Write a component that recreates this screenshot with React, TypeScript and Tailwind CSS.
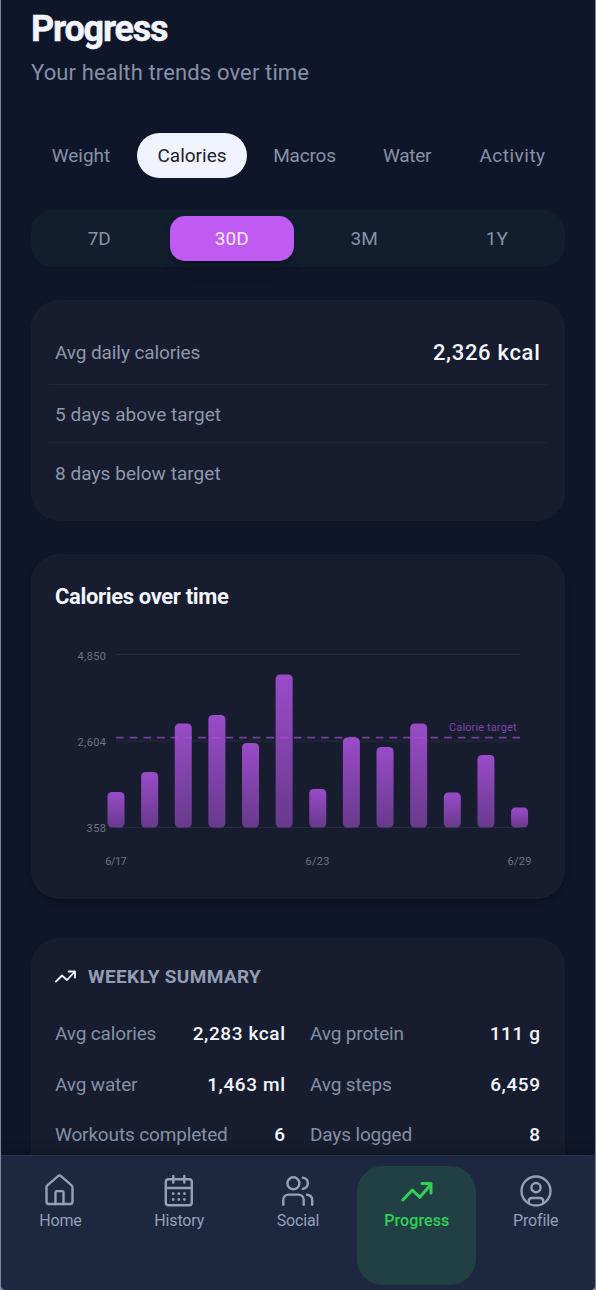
import type { ReactNode } from 'react'
import clsx from 'clsx'

const metrics = [
  { label: 'Weight', className: 'w-[100px]' },
  { label: 'Calories', className: 'w-[110px]' },
  { label: 'Macros', className: 'w-[103px] tracking-[-0.2px]' },
  { label: 'Water', className: 'w-[90px] tracking-[-0.3px]' },
  { label: 'Activity', className: 'w-[107px] pl-[2px] tracking-[0.5px]' },
]

const ranges = ['7D', '30D', '3M', '1Y']

// top edge of each bar, in chart units
const bars = [173, 153, 104.5, 96, 124, 55.5, 170, 118.5, 128, 104.5, 173.5, 136, 188.5]

const summary = [
  { label: 'Avg calories', value: '2,283 kcal' },
  { label: 'Avg protein', value: '111 g' },
  { label: 'Avg water', value: '1,463 ml' },
  { label: 'Avg steps', value: '6,459' },
  { label: 'Workouts completed', value: '6' },
  { label: 'Days logged', value: '8' },
]

function Icon({ children, width = 2.4 }: { children: ReactNode; width?: number }) {
  return (
    <svg
      className="size-8 overflow-visible"
      viewBox="0 0 32 32"
      fill="none"
      stroke="currentColor"
      strokeWidth={width}
      strokeLinecap="round"
      strokeLinejoin="round"
    >
      {children}
    </svg>
  )
}

const navItems = [
  {
    label: 'Home',
    icon: (
      <Icon>
        <path d="M2.5 12.2c0-.8.3-1.4.9-1.9L14 1.200c.9-.8 2.100-.8 3 0l10.600 9.100c.6.5.9 1.100.9 1.900v14.600c0 1.300-.9 2.200-2.200 2.200H4.700c-1.300 0-2.200-.9-2.200-2.200z" />
        <path d="M11.500 29V17.200c0-.7.4-1.100 1.100-1.100h5.800c.7 0 1.100.4 1.100 1.100V29" />
      </Icon>
    ),
  },
  {
    label: 'History',
    icon: (
      <Icon>
        <rect x="2.800" y="4.300" width="26" height="26" rx="2.800" />
        <path d="M2.800 13h26M10.300 1v6.500M21.300 1v6.500" />
        <path d="M10.200 18.700h.01M15.800 18.700h.01M21.400 18.700h.01M10.200 24.500h.01M15.800 24.500h.01M21.400 24.500h.01" strokeWidth="2.800" />
      </Icon>
    ),
  },
  {
    label: 'Social',
    icon: (
      <Icon>
        <circle cx="11.400" cy="8.300" r="6" />
        <path d="M1.300 29.800V25c0-3.300 2.200-5.400 5.400-5.400h9.600c3.200 0 5.400 2.100 5.400 5.400v4.800" />
        <path d="M20.800 2.700c6.700 1.400 6.700 9.800 0 11.200" />
        <path d="M25 19.700c3.300.4 5.200 2.500 5.200 5.500v4.600" />
      </Icon>
    ),
  },
  {
    label: 'Progress',
    active: true,
    icon: (
      <Icon width={3}>
        <path d="M1.800 25 11.300 15l7.500 7.300L29.800 9.500" />
        <path d="M21 8.500h9v9.500" />
      </Icon>
    ),
  },
  {
    label: 'Profile',
    icon: (
      <Icon>
        <circle cx="16" cy="16" r="14.500" />
        <circle cx="16" cy="12.600" r="4.600" />
        <path d="M8.700 28v-1.700c0-2 1.400-3.300 3.300-3.300h8c1.900 0 3.300 1.300 3.300 3.300V28" />
      </Icon>
    ),
  },
]

function CaloriesChart() {
  return (
    <svg className="block h-[260px] w-[486px]" viewBox="0 0 486 260" fontFamily="Roboto, sans-serif" fontSize="11">
      <defs>
        <linearGradient id="bar" x1="0" y1="0" x2="0" y2="1">
          <stop offset="0" stopColor="#9a4bc9" />
          <stop offset="1" stopColor="#673a8b" />
        </linearGradient>
      </defs>
      {[35.5, 122, 208.5].map((y) => (
        <line key={y} x1="61" x2="465" y1={y} y2={y} stroke="#262c3e" strokeWidth="1" />
      ))}
      {bars.map((y, i) => (
        <rect key={i} x={52.5 + i * 33.63} y={y} width="17" height={208.5 - y} rx="4.500" fill="url(#bar)" />
      ))}
      <line x1="61" x2="465" y1="118.700" y2="118.700" stroke="#a852d8" strokeOpacity="0.650" strokeWidth="1.800" strokeDasharray="7.800 5.870" />
      <g fill="#6b7486">
        <text x="51" y="40.500" textAnchor="end" textLength="28.500">4,850</text>
        <text x="51" y="126.700" textAnchor="end" textLength="28.500">2,604</text>
        <text x="51" y="213.300" textAnchor="end" textLength="19.500">358</text>
        <text x="61" y="246" textAnchor="middle" textLength="21.500">6/17</text>
        <text x="262.500" y="246" textAnchor="middle" textLength="24">6/23</text>
        <text x="464.500" y="246" textAnchor="middle" textLength="24">6/29</text>
      </g>
      <text x="461.500" y="112" textAnchor="end" textLength="67.500" fill="#7f42a8">Calorie target</text>
    </svg>
  )
}

export default function App() {
  return (
    <div className="h-[1290px] w-[596px] bg-[#7f879b] font-[Roboto,sans-serif]">
      <div className="mx-px flex h-full flex-col overflow-hidden rounded-b-[5px] bg-[#10162a]">
        <main className="flex min-h-0 flex-1 flex-col overflow-hidden px-[30px]">
          <h1 className="mt-[7px] h-11 text-[36px] leading-11 font-bold tracking-[-1.200px] text-[#f3f5fe] [-webkit-text-stroke:0.500px_#f3f5fe]">
            Progress
          </h1>
          <p className="mt-2 h-7 text-[22px] leading-7 tracking-[0.130px] text-[#8590a6]">Your health trends over time</p>

          <div className="mt-[46px] flex h-[45px] shrink-0 gap-[6px]">
            {metrics.map((metric) => (
              <button
                key={metric.label}
                className={clsx(
                  'shrink-0 rounded-full pt-[2px] text-[19px] whitespace-nowrap',
                  metric.className,
                  metric.label === 'Calories' ? 'bg-[#f1f4fe] text-[#1b2030]' : 'text-[#8791a6]',
                )}
              >
                {metric.label}
              </button>
            ))}
          </div>

          <div className="mt-8 grid h-[57px] shrink-0 grid-cols-4 gap-2 rounded-[22px] bg-[#121d2e] p-[6px]">
            {ranges.map((range) => (
              <button
                key={range}
                className={clsx(
                  'rounded-[15px] pt-[2px] text-[19px]',
                  range === '30D' ? 'bg-[#bf5af2] text-[#fbeaff] shadow-lg shadow-black/20' : 'text-[#8791a6]',
                )}
              >
                {range}
              </button>
            ))}
          </div>

          <section className="mt-[33px] h-[221px] shrink-0 rounded-[28px] bg-[#171d2f] px-[18px] pt-[19px] text-[19px] text-[#8e98ac]">
            <div className="flex h-[66px] items-center justify-between border-b border-[#1f2537] pt-[3px] pr-[7px] pl-[6px]">
              <span className="tracking-[-0.100px]">Avg daily calories</span>
              <span className="-mr-[0.500px] pb-[2px] text-[22px] font-medium tracking-[0.700px] text-[#f3f5fe]">2,326 kcal</span>
            </div>
            <div className="flex h-[58px] items-center border-b border-[#1f2537] px-[6px] pt-[3px] tracking-[0.050px]">5 days above target</div>
            <div className="flex h-[60px] items-center px-[6px] pt-[3px] tracking-[0.050px]">8 days below target</div>
          </section>

          <section className="mt-[33px] h-[345px] shrink-0 rounded-[28px] bg-[#171d2f] px-6 pt-7 shadow-md shadow-black/20">
            <h2 className="h-[30px] text-[22px] leading-[30px] font-bold tracking-[-0.350px] text-[#f3f5fe]">Calories over time</h2>
            <div className="mt-[7px]">
              <CaloriesChart />
            </div>
          </section>

          <section className="mt-[39px] h-[300px] shrink-0 rounded-[28px] bg-[#171d2f] pt-[26px] pr-[25px] pl-6">
            <div className="flex h-[26px] items-center gap-3">
              <svg className="h-[22px] w-[21px] text-[#f3f5fe]" viewBox="0 0 21 22" fill="none" stroke="currentColor" strokeWidth="1.800" strokeLinecap="round" strokeLinejoin="round">
                <path d="M1 15.500 7 9.500l5 4.500L19.500 6M13.500 5.500H20v6" />
              </svg>
              <h2 className="pt-px text-[19px] font-bold tracking-[0.350px] text-[#929db3]">WEEKLY SUMMARY</h2>
            </div>
            <div className="mt-[19px] grid grid-cols-2 gap-x-[25px]">
              {summary.map((item) => (
                <div key={item.label} className="flex h-[50.500px] items-center justify-between text-[19px] whitespace-nowrap">
                  <span className="tracking-[-0.150px] text-[#8490a5]">{item.label}</span>
                  <span className="-mr-[0.600px] font-medium tracking-[0.600px] text-[#f3f5fe]">{item.value}</span>
                </div>
              ))}
            </div>
          </section>
        </main>

        <nav className="grid h-[135px] shrink-0 grid-cols-5 border-t border-[#293149] bg-[#1d2740] pt-[10px] shadow-[0_-4px_10px_rgba(0,0,0,0.25)]">
          {navItems.map((item) => (
            <a
              key={item.label}
              className={clsx(
                'flex h-[119px] flex-col items-center rounded-[26px] pt-[9px] text-[16px]',
                item.active ? 'bg-[#204043] font-medium tracking-[0.100px] text-[#30d158]' : 'tracking-[-0.150px] text-[#94a0b8]',
              )}
            >
              {item.icon}
              <span className="mt-[4px] leading-5">{item.label}</span>
            </a>
          ))}
        </nav>
      </div>
    </div>
  )
}
